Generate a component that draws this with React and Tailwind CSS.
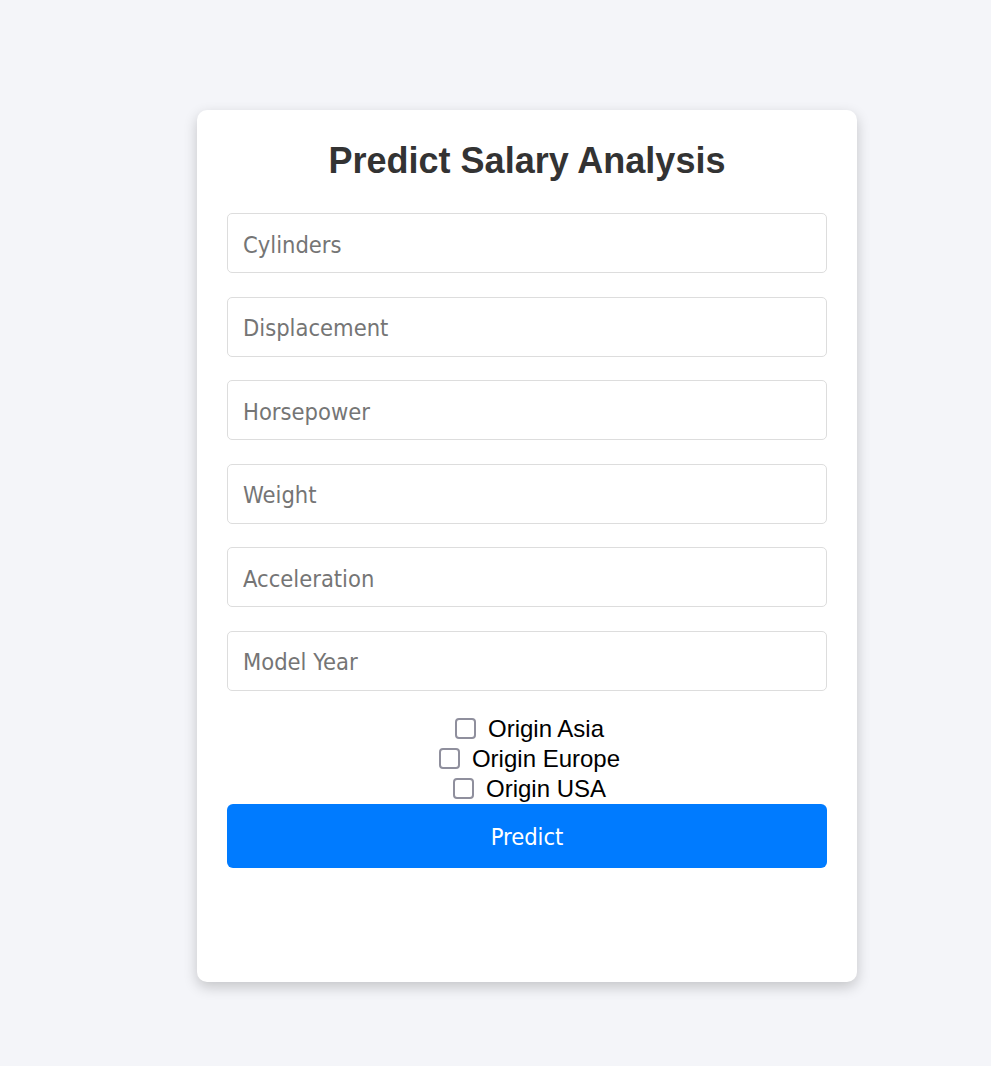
import React from 'react';

const fields = ['Cylinders', 'Displacement', 'Horsepower', 'Weight', 'Acceleration', 'Model Year'];
const origins = ['Origin Asia', 'Origin Europe', 'Origin USA'];

const tahoma = { fontFamily: '"DejaVu Sans Condensed", "Open Sans", sans-serif', fontStretch: 'condensed' };

export default function App() {
  return (
    <div className="min-h-[1066px] bg-[#f4f5f9] pt-[110px] pl-[197px]">
      <div className="w-[660px] h-[872px] bg-white rounded-[10px] shadow-[0_5px_14px_rgba(0,0,0,0.2)] px-[30px] pt-[30px]">
        <h1 className="text-center text-[36px] font-bold text-[#333] leading-[41px] mb-[32px]" style={{ fontFamily: '"Liberation Sans", Arial, sans-serif' }}>
          Predict Salary Analysis
        </h1>

        <form onSubmit={e => e.preventDefault()} className="flex flex-col">
          <div className="flex flex-col gap-[23.6px]">
            {fields.map(f => (
              <input key={f} type="text" placeholder={f}
                className="w-full h-[60px] border border-[#ddd] rounded-[5px] px-[15px] pt-[3px] text-[23.5px] text-[#333] placeholder:text-[#757575] outline-none"
                style={tahoma} />
            ))}
          </div>

          <div className="flex flex-col items-center mt-[23px] pl-[5px]" style={{ fontFamily: '"Liberation Sans", Arial, sans-serif' }}>
            {origins.map(o => (
              <label key={o} className="flex items-center gap-[12px] h-[30px] text-[24px] text-black">
                <input type="checkbox" className="appearance-none w-[21px] h-[21px] m-0 border-[2.5px] border-[#8f8f9d] rounded-[4px] bg-white checked:bg-[#007bff] checked:border-[#007bff]" />
                {o}
              </label>
            ))}
          </div>

          <button type="submit"
            className="w-full h-[64px] bg-[#007bff] text-white text-[23.5px] rounded-[6px] pt-[3px]"
            style={tahoma}>
            Predict
          </button>
        </form>
      </div>
    </div>
  );
}
